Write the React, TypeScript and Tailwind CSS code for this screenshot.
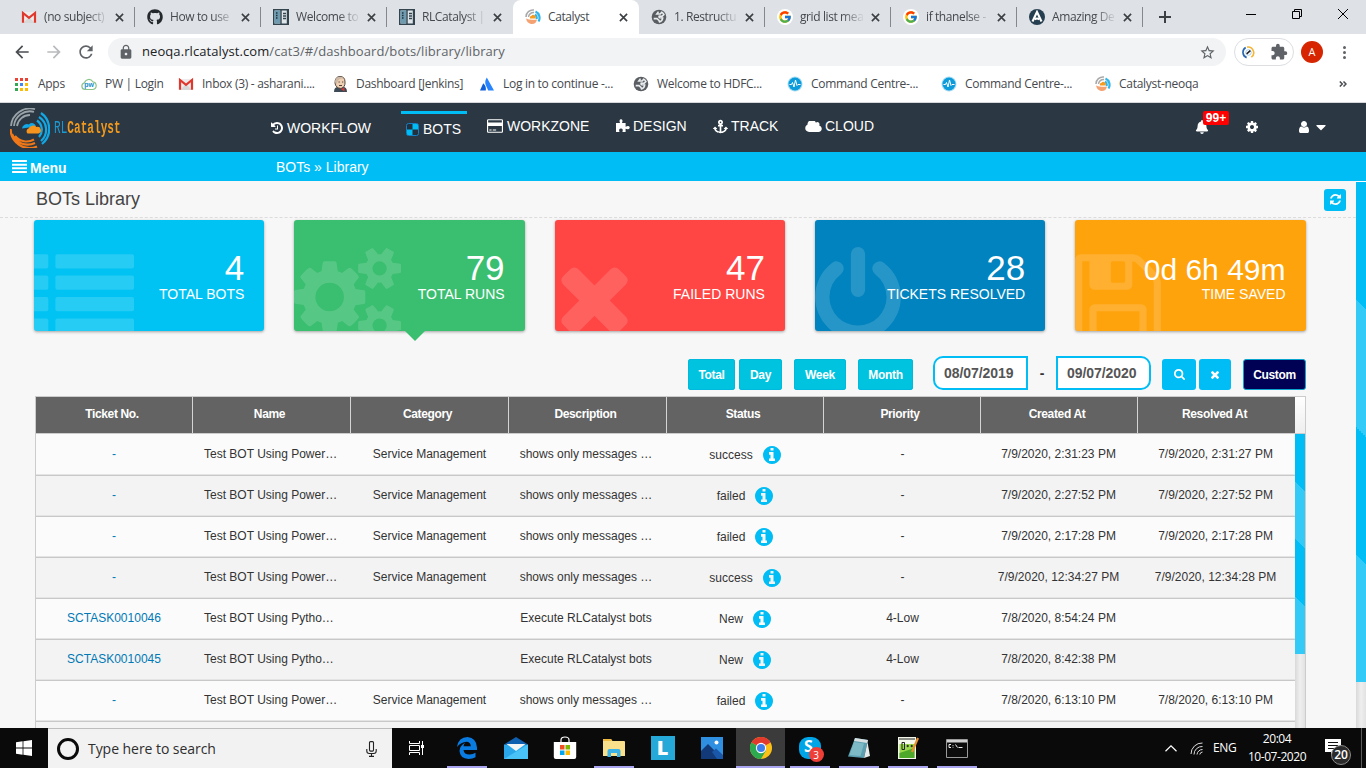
import type { ReactNode } from 'react';
import { FaAnchor, FaBell, FaGithub, FaCaretDown } from 'react-icons/fa';
import { FcGoogle } from 'react-icons/fc';
import { MdArrowBack, MdArrowForward, MdRefresh, MdLock, MdStarBorder, MdExtension } from 'react-icons/md';

const GLYPH = {
  power:
    'M1664 896q0 156-61 298t-164 245-245 164-298 61-298-61-245-164-164-245-61-298q0-182 80.5-343t226.5-270q43-32 95.5-25t83.5 50q32 42 24.5 94.5t-49.5 84.5q-98 74-151.5 181t-53.5 228q0 104 40.5 198.5t109.5 163.5 163.5 109.5 198.5 40.5 198.5-40.5 163.5-109.5 109.5-163.5 40.5-198.5q0-121-53.5-228t-151.5-181q-42-32-49.5-84.5t24.5-94.5q31-43 84-50t95 25q146 109 226.5 270t80.5 343zm-640-768v640q0 52-38 90t-90 38-90-38-38-90v-640q0-52 38-90t90-38 90 38 38 90z',
  times:
    'M1490 1322q0 40-28 68l-136 136q-28 28-68 28t-68-28l-294-294-294 294q-28 28-68 28t-68-28l-136-136q-28-28-28-68t28-68l294-294-294-294q-28-28-28-68t28-68l136-136q28-28 68-28t68 28l294 294 294-294q28-28 68-28t68 28l136 136q28 28 28 68t-28 68l-294 294 294 294q28 28 28 68z',
  cogs: 'M832 896q0-106-75-181t-181-75-181 75-75 181 75 181 181 75 181-75 75-181zm768 512q0-52-38-90t-90-38-90 38-38 90q0 53 37.5 90.5t90.5 37.5 90.5-37.5 37.5-90.5zm0-1024q0-52-38-90t-90-38-90 38-38 90q0 53 37.5 90.5t90.5 37.5 90.5-37.5 37.5-90.5zm-384 421v185q0 10-7 19.5t-16 10.5l-155 24q-11 35-32 76 34 48 90 115 7 11 7 20 0 12-7 19-23 30-82.5 89.5t-78.5 59.5q-11 0-21-7l-115-90q-37 19-77 31-11 108-23 155-7 24-30 24h-186q-11 0-20-7.5t-10-17.5l-23-153q-34-10-75-31l-118 89q-7 7-20 7-11 0-21-8-144-133-144-160 0-9 7-19 10-14 41-53t47-61q-23-44-35-82l-152-24q-10-1-17-9.5t-7-19.5v-185q0-10 7-19.5t16-10.5l155-24q11-35 32-76-34-48-90-115-7-11-7-20 0-12 7-20 22-30 82-89t79-59q11 0 21 7l115 90q34-18 77-32 11-108 23-154 7-24 30-24h186q11 0 20 7.5t10 17.5l23 153q34 10 75 31l118-89q8-7 20-7 11 0 21 8 144 133 144 160 0 8-7 19-12 16-42 54t-45 60q23 48 34 82l152 23q10 2 17 10.5t7 19.5zm640 533v140q0 16-149 31-12 27-30 52 51 113 51 138 0 4-4 7-122 71-124 71-8 0-46-47t-52-68q-20 2-30 2t-30-2q-14 21-52 68t-46 47q-2 0-124-71-4-3-4-7 0-25 51-138-18-25-30-52-149-15-149-31v-140q0-16 149-31 13-29 30-52-51-113-51-138 0-4 4-7 4-2 35-20t59-34 30-16q8 0 46 46.5t52 67.5q20-2 30-2t30 2q51-71 92-112l6-2q4 0 124 70 4 3 4 7 0 25-51 138 17 23 30 52 149 15 149 31zm0-1024v140q0 16-149 31-12 27-30 52 51 113 51 138 0 4-4 7-122 71-124 71-8 0-46-47t-52-68q-20 2-30 2t-30-2q-14 21-52 68t-46 47q-2 0-124-71-4-3-4-7 0-25 51-138-18-25-30-52-149-15-149-31v-140q0-16 149-31 13-29 30-52-51-113-51-138 0-4 4-7 4-2 35-20t59-34 30-16q8 0 46 46.5t52 67.5q20-2 30-2t30 2q51-71 92-112l6-2q4 0 124 70 4 3 4 7 0 25-51 138 17 23 30 52 149 15 149 31z',
  save: 'M512 1536h768v-384h-768v384zm896 0h128v-896q0-14-10-38.5t-20-34.5l-281-281q-10-10-34-20t-39-10v416q0 40-28 68t-68 28h-576q-40 0-68-28t-28-68v-416h-128v1280h128v-416q0-40 28-68t68-28h832q40 0 68 28t28 68v416zm-384-928v-320q0-13-9.5-22.5t-22.5-9.5h-192q-13 0-22.5 9.5t-9.5 22.5v320q0 13 9.5 22.5t22.5 9.5h192q13 0 22.5-9.5t9.5-22.5zm640 32v928q0 40-28 68t-68 28h-1344q-40 0-68-28t-28-68v-1344q0-40 28-68t68-28h928q40 0 88 20t76 48l280 280q28 28 48 76t20 88z',
  refresh:
    'M1639 1056q0 5-1 7-64 268-268 434.5t-478 166.5q-146 0-282.5-55t-243.5-157l-129 129q-19 19-45 19t-45-19-19-45v-448q0-26 19-45t45-19h448q26 0 45 19t19 45-19 45l-137 137q71 66 161 102t187 36q134 0 250-65t186-179q11-17 53-117 8-23 30-23h192q13 0 22.5 9.5t9.5 22.5zm25-800v448q0 26-19 45t-45 19h-448q-26 0-45-19t-19-45 19-45l138-138q-148-137-349-137-134 0-250 65t-186 179q-11 17-53 117-8 23-30 23h-199q-13 0-22.5-9.5t-9.5-22.5v-7q65-268 270-434.5t480-166.5q146 0 284 55.5t245 156.5l130-129q19-19 45-19t45 19 19 45z',
  search:
    'M1216 832q0-185-131.5-316.5t-316.5-131.5-316.5 131.5-131.5 316.5 131.5 316.5 316.5 131.5 316.5-131.5 131.5-316.5zm512 832q0 52-38 90t-90 38q-54 0-90-38l-343-342q-179 124-399 124-143 0-273.5-55.5t-225-150-150-225-55.5-273.5 55.5-273.5 150-225 225-150 273.5-55.5 273.5 55.5 225 150 150 225 55.5 273.5q0 220-124 399l343 343q37 37 37 90z',
  info: 'M1152 1376v-160q0-14-9-23t-23-9h-96v-512q0-14-9-23t-23-9h-320q-14 0-23 9t-9 23v160q0 14 9 23t23 9h96v320h-96q-14 0-23 9t-9 23v160q0 14 9 23t23 9h448q14 0 23-9t9-23zm-128-896v-160q0-14-9-23t-23-9h-192q-14 0-23 9t-9 23v160q0 14 9 23t23 9h192q14 0 23-9t9-23zm640 416q0 209-103 385.5t-279.5 279.5-385.5 103-385.5-103-279.5-279.5-103-385.5 103-385.5 279.5-279.5 385.5-103 385.5 103 279.5 279.5 103 385.5z',
  history:
    'M1664 896q0 156-61 298t-164 245-245 164-298 61q-172 0-327-72.5t-264-204.5q-7-10-6.5-22.5t8.5-20.5l137-138q10-9 25-9 16 2 23 12 73 95 179 147t225 52q104 0 198.5-40.5t163.5-109.5 109.5-163.5 40.5-198.5-40.5-198.5-109.5-163.5-163.5-109.5-198.5-40.5q-98 0-188 35.5t-160 101.5l137 138q31 30 14 69-17 40-59 40h-448q-26 0-45-19t-19-45v-448q0-42 40-59 39-17 69 14l130 129q107-101 244.5-156.5t284.5-55.5q156 0 298 61t245 164 164 245 61 298zm-640-288v448q0 14-9 23t-23 9h-320q-14 0-23-9t-9-23v-64q0-14 9-23t23-9h224v-352q0-14 9-23t23-9h64q14 0 23 9t9 23z',
  cloud:
    'M1984 1152q0 159-112.5 271.5t-271.5 112.5h-1088q-185 0-316.5-131.5t-131.5-316.5q0-132 71-241.5t187-163.5q-2-28-2-43 0-212 150-362t362-150q158 0 286.5 88t187.5 230q70-62 166-62 106 0 181 75t75 181q0 75-41 138 129 30 213 134.5t84 239.5z',
  card: 'M1632 128q66 0 113 47t47 113v1216q0 66-47 113t-113 47h-1472q-66 0-113-47t-47-113v-1216q0-66 47-113t113-47h1472zm-1472 128q-13 0-22.5 9.5t-9.5 22.5v224h1536v-224q0-13-9.5-22.5t-22.5-9.5h-1472zm1472 1280q13 0 22.5-9.5t9.5-22.5v-608h-1536v608q0 13 9.5 22.5t22.5 9.5h1472zm-1376-128v-128h256v128h-256zm384 0v-128h384v128h-384z',
  user: 'M1536 1399q0 109-62.5 187t-150.5 78h-854q-88 0-150.5-78t-62.5-187q0-85 8.5-160.5t31.5-152 58.5-131 94-89 134.5-34.5q131 128 313 128t313-128q76 0 134.5 34.5t94 89 58.5 131 31.5 152 8.5 160.5zm-256-887q0 159-112.5 271.5t-271.5 112.5-271.5-112.5-112.5-271.5 112.5-271.5 271.5-112.5 271.5 112.5 112.5 271.5z',
  cog: 'M1152 896q0-106-75-181t-181-75-181 75-75 181 75 181 181 75 181-75 75-181zm512-109v222q0 12-8 23t-20 13l-185 28q-19 54-39 91 35 50 107 138 10 12 10 25t-9 23q-27 37-99 108t-94 71q-12 0-26-9l-138-108q-44 23-91 38-16 136-29 186-7 28-36 28h-222q-14 0-24.5-8.5t-11.5-21.5l-28-184q-49-16-90-37l-141 107q-10 9-25 9-14 0-25-11-126-114-165-168-7-10-7-23 0-12 8-23 15-21 51-66.5t54-70.5q-27-50-41-99l-183-27q-13-2-21-12.5t-8-23.5v-222q0-12 8-23t19-13l186-28q14-46 39-92-40-57-107-138-10-12-10-24 0-10 9-23 26-36 98.5-107.5t94.5-71.5q13 0 26 10l138 107q44-23 91-38 16-136 29-186 7-28 36-28h222q14 0 24.5 8.5t11.5 21.5l28 184q49 16 90 37l142-107q9-9 24-9 13 0 25 10 129 119 165 170 7 8 7 22 0 12-8 23-15 21-51 66.5t-54 70.5q26 50 41 98l183 28q13 2 21 12.5t8 23.5z',
};

function Glyph({ d, box, className }: { d: string; box?: string; className: string }) {
  return (
    <svg viewBox={box ?? '128 128 1536 1536'} className={`shrink-0 fill-current ${className}`}>
      <path d={d} />
    </svg>
  );
}

/* ---------- favicons ---------- */

function Gmail() {
  return (
    <svg viewBox="0 0 16 16" className="size-4 shrink-0">
      <path d="M1.500 3h13v11h-13z" fill="#ececec" />
      <path d="M2 14l6-6 6 6z" fill="#d8d8d8" />
      <path d="M2 13.800V4l6 4.800L14 4v9.800" fill="none" stroke="#e0382c" strokeWidth="2.200" />
    </svg>
  );
}

function Columns() {
  return (
    <svg viewBox="0 0 16 16" className="size-4 shrink-0">
      <rect x=".75" y=".75" width="14.5" height="14.5" fill="#dfe6ea" stroke="#33444f" strokeWidth="1.5" />
      <rect x="1.5" y="1.5" width="6" height="13" fill="#6f9bb0" />
      <path d="M8 1v14M14.500 1v14" stroke="#33444f" strokeWidth="1.4" />
      <path d="M3 4h1.5M3 6.5h1.5M3 9h1.5" stroke="#1d3440" strokeWidth="1.4" />
      <path d="M10 4.5h3M10 7h3M10 9.5h3" stroke="#33444f" strokeWidth="1.4" />
    </svg>
  );
}

function Swirl({ className }: { className: string }) {
  return (
    <svg viewBox="0 0 40 40" className={`shrink-0 ${className}`}>
      <g fill="none">
        <path d="M1 18A19 19 0 0 1 25 1.200M4 18A16 16 0 0 1 24 3.800M7 18A13 13 0 0 1 20 7" stroke="#9aa3a8" strokeWidth="1.800" />
        <path d="M31 5A19.500 19.500 0 0 1 32 36M29 9A15 15 0 0 1 31 33M27 12.500A11 11 0 0 1 29 29" stroke="#12a8e6" strokeWidth="2.200" />
        <path d="M.6 21A19 19 0 0 0 27 38.500M2 26A17 17 0 0 0 25 35M5 28A15 15 0 0 0 24 31.500" stroke="#f07818" strokeWidth="2.200" />
      </g>
      <path d="M12 20.500a5 5 0 0 1 7-4 4 4 0 0 1 7 2z" fill="#12a8e6" />
      <path d="M17.500 25.500a3 3 0 0 1 1-5 5 5 0 0 1 8-1.500 3.300 3.300 0 0 1 2 6.500z" fill="#f7941d" />
    </svg>
  );
}

function SwirlSmall() {
  return (
    <svg viewBox="0 0 16 16" className="size-4 shrink-0">
      <path d="M1 8A7 7 0 0 1 9 1M3.500 8A5 5 0 0 1 9 3.500" fill="none" stroke="#a9a9a9" strokeWidth="1.500" />
      <path d="M10.500 2.500A7 7 0 0 1 13.500 12.500M10 5.500A4 4 0 0 1 11.500 10" fill="none" stroke="#33b5ea" strokeWidth="2.200" />
      <path d="M1 9.500Q5 11.500 12 10.500 11 15.500 6 15 2 14 1 9.500z" fill="#f5a273" />
      <path d="M5 9.500a2 2 0 0 1 1.500-2.800 2 2 0 0 1 3.500 0 1.600 1.600 0 0 1 0 2.800z" fill="#f79a1d" />
    </svg>
  );
}

function Globe() {
  return (
    <svg viewBox="0 0 16 16" className="size-4 shrink-0">
      <circle cx="8" cy="8" r="7.300" fill="#5a5e62" />
      <path d="M7.500 2.600L5.800 5h3.400l1.500-1.800q1.500.8 2.200 2.300L11 7.300 8.300 7q-.8 1.300.7 1.700l2.700.2q-.3 3.200-3.200 4L8 11.500 6 9.600H2.700" fill="none" stroke="#e9ebed" strokeWidth="1.600" />
    </svg>
  );
}

function Pulse() {
  return (
    <svg viewBox="0 0 16 16" className="size-4 shrink-0">
      <circle cx="8" cy="8" r="7.500" fill="#a7dcf1" />
      <circle cx="8" cy="8" r="6.500" fill="#0c9cdb" />
      <path d="M2.500 8.500h2l1-2 1.500 4.500 1.500-7 1.500 5.500 1-1h2.500" fill="none" stroke="#fff" strokeWidth="1" />
    </svg>
  );
}

function GoogleDisc() {
  return (
    <span className="flex size-4 shrink-0 items-center justify-center rounded-full bg-white">
      <FcGoogle className="size-3.5" />
    </span>
  );
}

function LetterDisc() {
  return (
    <svg viewBox="0 0 16 16" className="size-4 shrink-0">
      <circle cx="8" cy="8" r="8" fill="#263f50" />
      <path d="M3.500 12.500L8 3l4.500 9.500M5.800 10.500Q8 8.500 10.200 10.500" fill="none" stroke="#fff" strokeWidth="2.100" />
    </svg>
  );
}

function Jenkins() {
  return (
    <svg viewBox="0 0 16 16" className="size-4 shrink-0">
      <path d="M2 16q0-5 4-5h5q4 0 4 5z" fill="#3c4a55" />
      <path d="M3 7q0-6.500 5-6.500T13 6q.5 5-4 6.500Q3.500 12 3 7z" fill="#efcfb2" stroke="#54463c" strokeWidth="1" />
      <path d="M3 6Q3 1 8 .8q2.500 0 4 2Q8 1.500 6 4.500L4.500 8z" fill="#cdb9a5" />
      <path d="M7.500 12l5 3.500V11.500l-3 1.500z" fill="#d33833" />
      <path d="M6.500 6h1.300M10 6h1.300M7 9.500h3" stroke="#54463c" strokeWidth="1" />
    </svg>
  );
}

function PwCloud() {
  return (
    <svg viewBox="0 0 16 14" className="h-3.5 w-4 shrink-0">
      <path d="M4 12.500a3.400 3.400 0 0 1-.5-6.700 4.500 4.500 0 0 1 8.300-1 3.900 3.900 0 0 1 .2 7.700z" fill="#fff" stroke="#8bc48a" strokeWidth="1.200" />
      <text x="8" y="10.200" textAnchor="middle" fontSize="7" fontWeight="700" fill="#1a8fc8" fontFamily="Liberation Sans, sans-serif">
        pw
      </text>
    </svg>
  );
}

function Atlassian() {
  return (
    <svg viewBox="0 0 16 16" className="size-4 shrink-0">
      <path d="M4.200 7.200L1 14.500h5.800Q7.500 10 4.200 7.200z" fill="#0f5fd8" />
      <path d="M7.800 1.500Q5 6 7.200 10l2 4.500H15z" fill="#2684ff" />
    </svg>
  );
}

function AppsGrid() {
  const colors = ['#ea4335', '#ea4335', '#ea4335', '#34a853', '#4285f4', '#fbbc05', '#34a853', '#fbbc05', '#fbbc05'];
  return (
    <svg viewBox="0 0 13 13" className="size-[13px] shrink-0">
      {colors.map((c, i) => (
        <rect key={i} x={(i % 3) * 5} y={Math.floor(i / 3) * 5} width="3" height="3" fill={c} />
      ))}
    </svg>
  );
}

/* ---------- browser chrome ---------- */

function CloseX() {
  return (
    <svg viewBox="0 0 10 10" className="size-[9px] shrink-0 stroke-[#3c4043] stroke-[1.8]">
      <path d="M1 1l8 8M9 1l-8 8" />
    </svg>
  );
}

const tabs: { icon: ReactNode; title: string; active?: boolean; line?: boolean }[] = [
  { icon: <Gmail />, title: '(no subject)', line: true },
  { icon: <FaGithub className="size-4 shrink-0 text-[#24292e]" />, title: 'How to use', line: true },
  { icon: <Columns />, title: 'Welcome to', line: true },
  { icon: <Columns />, title: 'RLCatalyst |' },
  { icon: <SwirlSmall />, title: 'Catalyst', active: true },
  { icon: <Globe />, title: '1. Restructu', line: true },
  { icon: <GoogleDisc />, title: 'grid list mea', line: true },
  { icon: <GoogleDisc />, title: 'if thanelse -', line: true },
  { icon: <LetterDisc />, title: 'Amazing De', line: true },
];

function TabStrip() {
  return (
    <div className="flex h-[34px] bg-[#dee1e6] pl-[9px]">
      {tabs.map((t, i) => (
        <div
          key={i}
          className={`flex h-[34px] w-[126px] items-center pr-[11.500px] pl-3 ${t.active ? 'rounded-t-lg bg-white' : ''} ${t.line ? 'bg-[linear-gradient(#84878b,#84878b)] bg-[length:1px_20px] bg-[position:100%_50%] bg-no-repeat' : ''}`}
        >
          {t.icon}
          <span
            className={`ml-[7px] w-[65px] text-[12px] tracking-[-0.4px] whitespace-nowrap text-[#45494d] ${t.active ? '' : '[mask-image:linear-gradient(90deg,#000_65%,rgba(0,0,0,0.1)_96%)]'}`}
          >
            {t.title}
          </span>
          <span className="ml-auto flex">
            <CloseX />
          </span>
        </div>
      ))}
      <div className="flex items-center pl-4">
        <svg viewBox="0 0 12 12" className="size-3 stroke-[#3c4043] stroke-2">
          <path d="M6 0v12M0 6h12" />
        </svg>
      </div>
      <div className="ml-auto flex h-7 items-center gap-9 pr-[18px] text-black">
        <svg viewBox="0 0 10 10" className="size-2.5 stroke-current">
          <path d="M0 5.500h10" />
        </svg>
        <svg viewBox="0 0 10 10" className="size-2.5 fill-none stroke-current">
          <path d="M.5 2.500h7v7h-7zM2.500 2.500v-2h7v7h-2" />
        </svg>
        <svg viewBox="0 0 10 10" className="size-2.5 stroke-current">
          <path d="M0 0l10 10M10 0L0 10" />
        </svg>
      </div>
    </div>
  );
}

function Toolbar() {
  return (
    <div className="flex h-9 items-center bg-white pl-3 text-[#5f6368]">
      <MdArrowBack className="size-5 text-[#4a4d51]" />
      <MdArrowForward className="ml-3 size-5 text-[#b8babd]" />
      <MdRefresh className="ml-3 size-5" />
      <div className="ml-[12px] flex h-7 w-[1118px] items-center rounded-full bg-[#f1f3f4] pr-2.5 pl-2.5">
        <MdLock className="size-4" />
        <div className="ml-2 text-[13px] tracking-[0.080px] whitespace-nowrap">
          <span className="text-[#202124]">neoqa.rlcatalyst.com</span>/cat3/#/dashboard/bots/library/library
        </div>
        <MdStarBorder className="ml-auto size-[17px]" />
      </div>
      <div className="ml-2 flex h-7 w-[60px] items-center justify-between rounded-full border border-[#dcdee1] pr-[5px] pl-[7px]">
        <svg viewBox="0 0 14 14" className="size-[13px] fill-none">
          <path d="M4 1.700A6 6 0 0 0 5 12.500" stroke="#2a67b0" strokeWidth="1.800" />
          <path d="M5.500 1.200A6 6 0 0 1 10 12" stroke="#f3b63a" strokeWidth="1.800" />
          <circle cx="7" cy="7" r="3" stroke="#9cc7e8" />
          <path d="M5 8.500l4-3.500" stroke="#222" strokeWidth="1.700" />
        </svg>
        <MdExtension className="size-[18px]" />
      </div>
      <div className="ml-[7px] flex size-[22px] items-center justify-center rounded-full bg-[#d62500] text-[11px] text-white">A</div>
      <div className="ml-5 flex flex-col gap-[2px]">
        <i className="size-[3px] rounded-full bg-[#5f6368]" />
        <i className="size-[3px] rounded-full bg-[#5f6368]" />
        <i className="size-[3px] rounded-full bg-[#5f6368]" />
      </div>
    </div>
  );
}

const bookmarks: { icon: ReactNode; label: string; width: string; gap: string }[] = [
  { icon: <AppsGrid />, label: 'Apps', width: 'w-[66px]', gap: 'gap-[10px]' },
  { icon: <PwCloud />, label: 'PW | Login', width: 'w-[97px]', gap: 'gap-2' },
  { icon: <Gmail />, label: 'Inbox (3) - asharani....', width: 'w-[154px]', gap: 'gap-2' },
  { icon: <Jenkins />, label: 'Dashboard [Jenkins]', width: 'w-[147px]', gap: 'gap-2' },
  { icon: <Atlassian />, label: 'Log in to continue -...', width: 'w-[154px]', gap: 'gap-2' },
  { icon: <Globe />, label: 'Welcome to HDFC...', width: 'w-[154px]', gap: 'gap-2' },
  { icon: <Pulse />, label: 'Command Centre-...', width: 'w-[154px]', gap: 'gap-2' },
  { icon: <Pulse />, label: 'Command Centre-...', width: 'w-[154px]', gap: 'gap-2' },
  { icon: <SwirlSmall />, label: 'Catalyst-neoqa', width: 'w-[130px]', gap: 'gap-2' },
];

function Bookmarks() {
  return (
    <div className="flex h-[33px] items-center border-b border-[#d5d7db] bg-white pb-1 pl-[15px]">
      {bookmarks.map((b, i) => (
        <div key={i} className={`flex shrink-0 items-center ${b.width} ${b.gap}`}>
          {b.icon}
          <span className="text-[12px] tracking-[-0.290px] whitespace-nowrap text-[#45494d]">{b.label}</span>
        </div>
      ))}
      <svg viewBox="0 0 8 6" className="ml-auto mr-[19px] h-1.5 w-2 fill-none stroke-[#4a4e52] stroke-[1.5]">
        <path d="M.8.500L3.300 3 .8 5.500M4.500.500L7 3 4.500 5.500" />
      </svg>
    </div>
  );
}

/* ---------- application header ---------- */

function NavItem({ icon, label, className }: { icon: ReactNode; label: string; className: string }) {
  return (
    <div className={`flex items-center whitespace-nowrap ${className}`}>
      {icon}
      <span>{label}</span>
    </div>
  );
}

function AppHeader() {
  return (
    <header className="flex h-[49px] items-start bg-[#2b3843] text-[14px] leading-5 text-white">
      <div className="flex h-[49px] w-[271px] items-center pl-[10px]">
        <Swirl className="size-[40px]" />
        <span className="ml-1 w-[66px] origin-left scale-x-[0.6] pt-0.5 font-['Liberation_Mono',monospace] text-[18.500px] whitespace-nowrap text-[#1b9ad2]">
          RL<b className="text-[#f39a1d]">Catalyst</b>
        </span>
      </div>
      <NavItem className="mt-[15px] w-[130px] gap-1" label="WORKFLOW" icon={<Glyph d={GLYPH.history} className="size-3" />} />
      <div className="mt-2 w-[66px] border-t-[3px] border-[#00bdf5]">
        <NavItem
          className="mt-[5px] gap-1 pl-[5px]"
          label="BOTS"
          icon={
            <svg viewBox="0 0 13 13" className="size-[13px]">
              <rect x=".5" y=".5" width="12" height="12" rx="2" fill="#22313d" stroke="#1580c4" />
              <path d="M6.500 1H11q1 0 1 1v4.500H6.500zM1 6.500h5.500V12H2q-1 0-1-1z" fill="#00bdf5" />
            </svg>
          }
        />
      </div>
      <NavItem className="mt-[13px] ml-5 w-[129px] gap-[4px]" label="WORKZONE" icon={<Glyph d={GLYPH.card} box="0 128 1792 1536" className="h-[14px] w-4" />} />
      <NavItem
        className="mt-[13px] w-[97px] gap-[3px]"
        label="DESIGN"
        icon={
          <svg viewBox="0 0 14 14" className="size-3.5 fill-white">
            <path d="M0 4h4Q2.700.3 5 .2 7.400.3 6 4h3.600v3.800q3.300-1.800 4.200.6-.6 2.800-4.200 1.400V13H6.400Q7.600 9.800 5 9.500 2.200 9.800 3.500 13H0z" />
          </svg>
        }
      />
      <NavItem className="mt-[13px] w-[92px] gap-[3px]" label="TRACK" icon={<FaAnchor className="size-[15px]" />} />
      <NavItem className="mt-[13px] gap-[3px]" label="CLOUD" icon={<Glyph d={GLYPH.cloud} box="64 256 1920 1280" className="h-[11px] w-[17px]" />} />
      <div className="relative mt-[17px] ml-auto w-[51px]">
        <FaBell className="h-[14px] w-[14px]" />
        <span className="absolute -top-[9px] left-2 flex h-[14px] w-[26px] items-center justify-center rounded-[2px] bg-[#ff0000] text-[12px] font-bold">99+</span>
      </div>
      <Glyph d={GLYPH.cog} className="mt-[18px] size-3" />
      <Glyph d={GLYPH.user} box="256 128 1280 1536" className="mt-[18px] ml-10 h-3 w-3 [preserve-aspect-ratio:none]" />
      <FaCaretDown className="mt-[16px] mr-[37px] ml-[3px] size-4" />
    </header>
  );
}

/* ---------- content ---------- */

const stats: { value: string; label: string; color: string; icon: ReactNode; selected?: boolean; small?: boolean }[] = [
  {
    value: '4',
    label: 'TOTAL BOTS',
    color: 'bg-[#00c3f3]',
    icon: (
      <svg viewBox="0 0 1792 1792" className="size-[100px] fill-white">
        {[128, 512, 896, 1280].map((y) => (
          <g key={y}>
            <rect x="-32" y={y} width="288" height="256" rx="32" />
            <rect x="384" y={y} width="1408" height="256" rx="32" />
          </g>
        ))}
      </svg>
    ),
  },
  { value: '79', label: 'TOTAL RUNS', color: 'bg-[#3abe70]', selected: true, icon: <Glyph d={GLYPH.cogs} box="-64 0 1920 1792" className="h-[100px] w-[107px]" /> },
  { value: '47', label: 'FAILED RUNS', color: 'bg-[#ff4644]', icon: <Glyph d={GLYPH.times} box="192 0 1408 1792" className="h-[100px] w-[79px]" /> },
  { value: '28', label: 'TICKETS RESOLVED', color: 'bg-[#0083be]', icon: <Glyph d={GLYPH.power} box="128 0 1536 1792" className="h-[100px] w-[86px]" /> },
  { value: '0d 6h 49m', label: 'TIME SAVED', color: 'bg-[#ffa30d]', small: true, icon: <Glyph d={GLYPH.save} box="128 0 1536 1792" className="h-[100px] w-[86px]" /> },
];

function StatCards() {
  return (
    <div className="mt-0.5 ml-[34px] grid h-[111px] w-[1271.5px] grid-cols-5 gap-[30px]">
      {stats.map((s) => (
        <div key={s.label} className={`relative rounded-[3px] text-white shadow-[0_1px_3px_rgba(0,0,0,0.35)] ${s.color}`}>
          <div className="absolute inset-0 overflow-hidden rounded-[3px]">
            <div className="mt-[27px] flex opacity-15">{s.icon}</div>
          </div>
          <div className="relative flex flex-col items-end pt-[28px] pr-5">
            <span className={`h-10 leading-10 ${s.small ? 'pt-0.5 text-[30px]' : 'text-[35px]'}`}>{s.value}</span>
            <span className="-mt-[4px] text-[14px] leading-5">{s.label}</span>
          </div>
          {s.selected && <i className="absolute top-full left-[111px] size-0 border-x-[10px] border-t-[10px] border-x-transparent border-t-[#3abe70]" />}
        </div>
      ))}
    </div>
  );
}

function Filters() {
  const btn = 'flex h-[31px] items-center justify-center rounded-[3px] bg-[#00c4df] shadow-[inset_0_0_0_1px_#00b9dc]';
  return (
    <div className="mt-[25px] flex h-[34px] items-end pl-[688px] text-[12px] font-bold tracking-[-0.330px] text-white">
      <div className={`${btn} w-[47px]`}>Total</div>
      <div className={`${btn} ml-1 w-[43px]`}>Day</div>
      <div className={`${btn} ml-3 w-[52px]`}>Week</div>
      <div className={`${btn} ml-3 w-[55px]`}>Month</div>
      <div className="ml-5 flex h-[34px] w-[95px] items-center rounded-l-[10px] border-2 border-[#00bdf5] bg-white pl-[9px] text-[14px] tracking-[-0.050px] text-[#555]">08/07/2019</div>
      <div className="flex h-[34px] w-7 items-center justify-center text-[14px] text-[#333]">-</div>
      <div className="flex h-[34px] w-[95px] items-center rounded-r-[10px] border-2 border-[#00bdf5] bg-white pl-[9px] text-[14px] tracking-[-0.050px] text-[#555]">09/07/2020</div>
      <div className="ml-[11px] flex h-[31px] w-[34px] items-center justify-center rounded-[3px] bg-[#00bdf5]">
        <Glyph d={GLYPH.search} box="64 128 1664 1664" className="size-[11px]" />
      </div>
      <div className="ml-[3px] flex h-[31px] w-8 items-center justify-center rounded-[3px] bg-[#00bdf5]">
        <Glyph d={GLYPH.times} box="302 366 1188 1188" className="mt-px size-[8px]" />
      </div>
      <div className="ml-3 flex h-[31px] w-[63px] items-center justify-center rounded-[3px] border border-[#0aa5cf] bg-[#000055]">Custom</div>
    </div>
  );
}

const COLS = 'grid grid-cols-[157px_158px_158px_158px_157px_157px_157px_157px]';
const heads = ['Ticket No.', 'Name', 'Category', 'Description', 'Status', 'Priority', 'Created At', 'Resolved At'];

const rows: string[][] = [
  ['-', 'Test BOT Using Power…', 'Service Management', 'shows only messages …', 'success', '-', '7/9/2020, 2:31:23 PM', '7/9/2020, 2:31:27 PM'],
  ['-', 'Test BOT Using Power…', 'Service Management', 'shows only messages …', 'failed', '-', '7/9/2020, 2:27:52 PM', '7/9/2020, 2:27:52 PM'],
  ['-', 'Test BOT Using Power…', 'Service Management', 'shows only messages …', 'failed', '-', '7/9/2020, 2:17:28 PM', '7/9/2020, 2:17:28 PM'],
  ['-', 'Test BOT Using Power…', 'Service Management', 'shows only messages …', 'success', '-', '7/9/2020, 12:34:27 PM', '7/9/2020, 12:34:28 PM'],
  ['SCTASK0010046', 'Test BOT Using Pytho…', '', 'Execute RLCatalyst bots', 'New', '4-Low', '7/8/2020, 8:54:24 PM', ''],
  ['SCTASK0010045', 'Test BOT Using Pytho…', '', 'Execute RLCatalyst bots', 'New', '4-Low', '7/8/2020, 8:42:38 PM', ''],
  ['-', 'Test BOT Using Power…', 'Service Management', 'shows only messages …', 'failed', '-', '7/8/2020, 6:13:10 PM', '7/8/2020, 6:13:10 PM'],
];

const CELL = [
  'pr-px text-[#0079b5]',
  'pl-[11px] text-left',
  'pr-px',
  'pr-[4px]',
  '',
  '',
  'pr-[2px]',
  'pr-[2px]',
];

const STRIPES = 'bg-[linear-gradient(45deg,rgba(255,255,255,0.2)_25%,transparent_25%,transparent_50%,rgba(255,255,255,0.2)_50%,rgba(255,255,255,0.2)_75%,transparent_75%)]';

function BotsTable() {
  return (
    <div className="mt-1.5 ml-[35px] flex h-[332px] w-[1271px] flex-col overflow-hidden border border-b-0 border-[#ccc] text-[12px] text-[#333]">
      <div className="flex h-[37px] shrink-0 border-b border-[#ccc] bg-linear-to-b from-white to-[#eee]">
        <div className={`${COLS} bg-[#636363] text-center font-bold tracking-[-0.350px] text-white`}>
          {heads.map((h, i) => (
            <div key={h} className={`pt-2 pr-[4px] leading-[18px] ${i < 7 ? 'border-r border-[#d4d4d4]' : ''}`}>
              {h}
            </div>
          ))}
        </div>
      </div>
      <div className="flex min-h-0 flex-1">
        <div className="w-[1259px] shrink-0 bg-[#fbfbfb] pt-px">
          {rows.map((r, i) => (
            <div key={i} className={`${COLS} h-[41px] border-b border-[#c8c8c8] text-center leading-[38px] shadow-[inset_0_-1px_#e4e4e4] ${i % 2 ? 'bg-[#f3f3f3]' : 'bg-[#fbfbfb]'}`}>
              {r.map((c, j) =>
                j === 4 ? (
                  <div key={j} className="flex items-center justify-center gap-[10px] pr-px">
                    <span className="leading-10">{c}</span>
                    <Glyph d={GLYPH.info} className="size-[18px] text-[#00bdf5]" />
                  </div>
                ) : (
                  <div key={j} className={`whitespace-nowrap ${CELL[j]} ${c.startsWith('Execute') ? 'pr-[2px]' : ''}`}>
                    {c}
                  </div>
                ),
              )}
            </div>
          ))}
          <div className="h-10 bg-[#f3f3f3]" />
        </div>
        <div className="w-2.5 bg-linear-to-r from-[#d9d9d9] via-[#efefef] to-[#e2e2e2]">
          <div className={`h-[220px] bg-[#00bdf5] ${STRIPES}`} />
        </div>
      </div>
    </div>
  );
}

/* ---------- taskbar ---------- */

function TaskCell({ children, line, active }: { children: ReactNode; line?: boolean; active?: boolean }) {
  return (
    <div className={`flex h-10 w-[49px] flex-col items-center ${active ? 'bg-[#3b3b3b]' : ''}`}>
      <div className="flex h-[38px] items-center pt-0.5">{children}</div>
      {line && <i className={`h-0.5 bg-[#a9a5ee] ${active ? 'w-full' : 'w-10'}`} />}
    </div>
  );
}

function Taskbar() {
  return (
    <footer className="flex h-10 items-center bg-[#0a0a0a] text-white">
      <div className="flex w-12 justify-center">
        <svg viewBox="0 0 16 16" className="size-4 fill-white">
          <path d="M0 2.200L6.600 1.300v6.200H0zM7.400 1.200L16 0v7.500H7.400zM0 8.400h6.600v6.300L0 13.800zM7.400 8.400H16V16l-8.600-1.200z" />
        </svg>
      </div>
      <div className="flex h-10 w-[344px] items-center border-t border-[#bdbdbd] bg-[#f2f2f2] pl-[9px]">
        <i className="size-[22px] rounded-full border-[3px] border-[#0a0a0a]" />
        <span className="ml-[9px] text-[14px] tracking-[-0.050px] text-[#2e2e2e]">Type here to search</span>
        <svg viewBox="0 0 11 16" className="mr-[15px] ml-auto h-4 w-[11px] fill-none stroke-[#222] stroke-[1.1]">
          <rect x="3.500" y=".6" width="4" height="9.500" rx="1" />
          <path d="M.8 8v2q0 2.500 2.500 2.500h4.400q2.500 0 2.500-2.500V8M5.500 12.500v3M3 15.400h5" />
        </svg>
      </div>
      <div className="flex w-[50px] justify-center">
        <svg viewBox="0 0 16 16" className="size-4 fill-none stroke-white">
          <path d="M.5 1v2.500h10V1M.5 15v-2.500h10V15M.5 5.500h10v5H.5zM13.500 1v14" />
          <path d="M12 5h3v3h-3z" fill="#fff" stroke="none" />
        </svg>
      </div>
      <TaskCell line>
        <svg viewBox="0 0 20 22" className="h-[22px] w-5">
          <path d="M0 10Q1.500 0 10.500 0 19.500 1 20 10.500V13H6.500q.5 4.500 6 4.600 3.500 0 6-1.800v4.400Q15.500 22 11.500 22 3 21.500 2.500 14q0-5.500 6-8.500Q6.500 7 6.500 9.200h7.300Q13.500 5 9.500 4.800 4 5 0 10z" fill="#0a7be0" />
        </svg>
      </TaskCell>
      <TaskCell>
        <svg viewBox="0 0 24 22" className="h-[22px] w-6">
          <path d="M0 7.500L12 0l12 7.500z" fill="#0f5fb0" />
          <path d="M0 7.500h24V22H0z" fill="#2aa7ea" />
          <path d="M2.500 7h19L12 14z" fill="#f4f4f4" />
          <path d="M0 22l24-14.500V22z" fill="#49c3f7" />
        </svg>
      </TaskCell>
      <TaskCell>
        <svg viewBox="0 0 24 24" className="size-6">
          <path d="M8 7V4q0-3 4-3t4 3v3" fill="none" stroke="#fff" strokeWidth="1.200" />
          <path d="M.8 6h22.400v15q0 2-2 2H2.800q-2 0-2-2z" fill="#fff" />
          <path d="M7 9h4.500v4.500H7z" fill="#f25022" />
          <path d="M12.500 9H17v4.500h-4.500z" fill="#7fba00" />
          <path d="M7 14.500h4.500V19H7z" fill="#00a4ef" />
          <path d="M12.500 14.500H17V19h-4.500z" fill="#ffb900" />
        </svg>
      </TaskCell>
      <TaskCell line>
        <svg viewBox="0 0 22 18" className="h-[18px] w-[22px]">
          <path d="M0 0h8l1.500 2H21q1 0 1 1v14H0z" fill="#fbe08c" />
          <path d="M0 0h8l1 2H0z" fill="#f0b93f" />
          <path d="M4.500 18v-6q0-2 2-2h9q2 0 2 2v6h-3.500v-4H8v4z" fill="#3cb3e8" />
        </svg>
      </TaskCell>
      <TaskCell>
        <div className="flex h-6 w-6 items-center justify-center bg-[#24a9d8] text-[20px] leading-none font-extrabold">L</div>
      </TaskCell>
      <TaskCell>
        <svg viewBox="0 0 22 22" className="size-[22px]">
          <path d="M0 0h22v22H0z" fill="#2f8fe0" />
          <path d="M0 14L7 7l15 15H0z" fill="#123a78" />
          <path d="M11 15l4-3.500L22 18v4h-6z" fill="#1b57a8" />
          <circle cx="15.500" cy="5.500" r="2" fill="#fff" />
        </svg>
      </TaskCell>
      <TaskCell line active>
        <svg viewBox="0 0 24 24" className="size-[22px]">
          <circle cx="12" cy="12" r="12" fill="#fbc116" />
          <path d="M12 12L1.600 6A12 12 0 0 1 22.400 6z" fill="#e23b2e" />
          <path d="M12 12L1.600 6A12 12 0 0 0 12 24l5.200-9z" fill="#2da94f" />
          <circle cx="12" cy="12" r="5.600" fill="#fff" />
          <circle cx="12" cy="12" r="4.400" fill="#3f7fec" />
        </svg>
      </TaskCell>
      <TaskCell line>
        <div className="relative flex size-[22px] items-center justify-center rounded-[9px] bg-[#00a5e8] text-[16px] leading-none font-bold">
          <span className="-mt-1 -ml-0.5">S</span>
          <span className="absolute top-[10px] left-[10px] flex size-[15px] items-center justify-center rounded-full bg-[#ee3e38] text-[10px] font-normal">3</span>
        </div>
      </TaskCell>
      <TaskCell line>
        <svg viewBox="0 0 22 22" className="size-[22px]">
          <path d="M7 1l13 2-4 18-16-1.500z" fill="#5b9fb0" />
          <path d="M7 1l13 2-.8 3L6 4z" fill="#d7dfe0" />
          <path d="M19.500 5L22 19l-6 2z" fill="#e6ecec" />
          <path d="M6 5l10 1.500L12.500 19 1.500 18z" fill="#7dbac6" />
        </svg>
      </TaskCell>
      <TaskCell line>
        <svg viewBox="0 0 22 24" className="h-6 w-[22px]">
          <path d="M1 1h18v22H1z" fill="#f3f8ea" />
          <path d="M2.500 8h15v14h-15z" fill="#9ad94b" />
          <path d="M2.500 17l15-5v10h-15z" fill="#4ea82a" />
          <path d="M5 6.500v7h2.500v-7zM9.500 10h2.500M13.500 10H16M10.700 8.800v2.400M14.700 8.800v2.400M2 3h16" fill="none" stroke="#222" />
          <path d="M21 2l-6 14" stroke="#e8912e" strokeWidth="2.200" />
        </svg>
      </TaskCell>
      <TaskCell line>
        <svg viewBox="0 0 22 19" className="h-[19px] w-[22px]">
          <path d="M.5.500h21v18H.5z" fill="#0c0c0c" stroke="#9a9a9a" />
          <path d="M1 1h20v2.500H1z" fill="#d0d0d0" />
          <path d="M5 5.500H3v3h2M7 6v.8M7 7.800v.8M9.500 5.500l2 3M12.500 8.500h4" fill="none" stroke="#eee" />
        </svg>
      </TaskCell>
      <div className="ml-auto flex items-center">
        <svg viewBox="0 0 12 7" className="h-[7px] w-3 fill-none stroke-white stroke-[1.2]">
          <path d="M.5 6.200L6 .8l5.500 5.400" />
        </svg>
        <svg viewBox="0 0 13 13" className="ml-[13px] size-[13px] fill-none stroke-[#ddd]">
          <path d="M1 12A11 11 0 0 1 12.500 1M4 12.500A8 8 0 0 1 12.500 4.500M7 12.500A5.500 5.500 0 0 1 12.500 7.500M9.800 12.500A3 3 0 0 1 12.500 10" />
        </svg>
        <span className="ml-[10px] w-[24px] text-[12px] tracking-[-0.300px]">ENG</span>
        <div className="ml-[9px] w-[62px] text-center text-[12px] leading-[18px] tracking-[-0.450px] whitespace-nowrap">
          <div>20:04</div>
          <div>10-07-2020</div>
        </div>
        <div className="relative ml-[17px] h-8 w-[36px]">
          <svg viewBox="0 0 16 16" className="mt-[7px] size-4">
            <path d="M0 0h16v13H9l-3 3v-3H0z" fill="#fff" />
            <path d="M3 3.500h10M3 6.500h10M3 9.500h7" stroke="#111" strokeWidth="1.200" />
          </svg>
          <span className="absolute top-[13px] left-[6px] flex size-5 items-center justify-center rounded-full border border-[#8a8a8a] bg-[#2a2a2a] text-[12px] font-semibold">20</span>
        </div>
        <i className="mr-1 h-10 w-px bg-[#5a5a5a]" />
      </div>
    </footer>
  );
}

export default function App() {
  return (
    <div className="flex h-[768px] w-[1366px] flex-col overflow-hidden bg-[#f7f7f7] font-['Open_Sans','Noto_Sans',sans-serif]">
      <TabStrip />
      <Toolbar />
      <Bookmarks />
      <div className="flex min-h-0 flex-1 flex-col font-['Liberation_Sans',Arial,sans-serif]">
        <AppHeader />
        <div className="flex h-[29px] shrink-0 items-center bg-[#00bdf5] text-[14px] text-white">
          <div className="flex w-[276px] items-center pl-3">
            <svg viewBox="0 0 15 13" className="h-[13px] w-[15px] fill-white">
              <path d="M0 0h15v2H0zM0 3.700h15v2H0zM0 7.300h15v2H0zM0 11h15v2H0z" />
            </svg>
            <b className="ml-[3px] pt-[3px]">Menu</b>
          </div>
          <span className="pt-0.5">BOTs » Library</span>
        </div>
        <div className="flex min-h-0 flex-1">
          <main className="w-[1356px]">
            <div className="flex h-[37px] items-center justify-between border-b border-dashed border-[#dcdcdc] pr-2.5 pl-9">
              <h1 className="text-[18px] text-[#444]">BOTs Library</h1>
              <div className="mt-px flex size-[22px] items-center justify-center rounded-[3px] bg-[#00bdf5] text-white">
                <Glyph d={GLYPH.refresh} className="size-[11px]" />
              </div>
            </div>
            <StatCards />
            <Filters />
            <BotsTable />
          </main>
          <div className="w-2.5 border-t border-white bg-linear-to-r from-[#d9d9d9] via-[#efefef] to-[#e2e2e2]">
            <div className={`h-[500px] bg-[#00bdf5] ${STRIPES}`} />
          </div>
        </div>
      </div>
      <Taskbar />
    </div>
  );
}
